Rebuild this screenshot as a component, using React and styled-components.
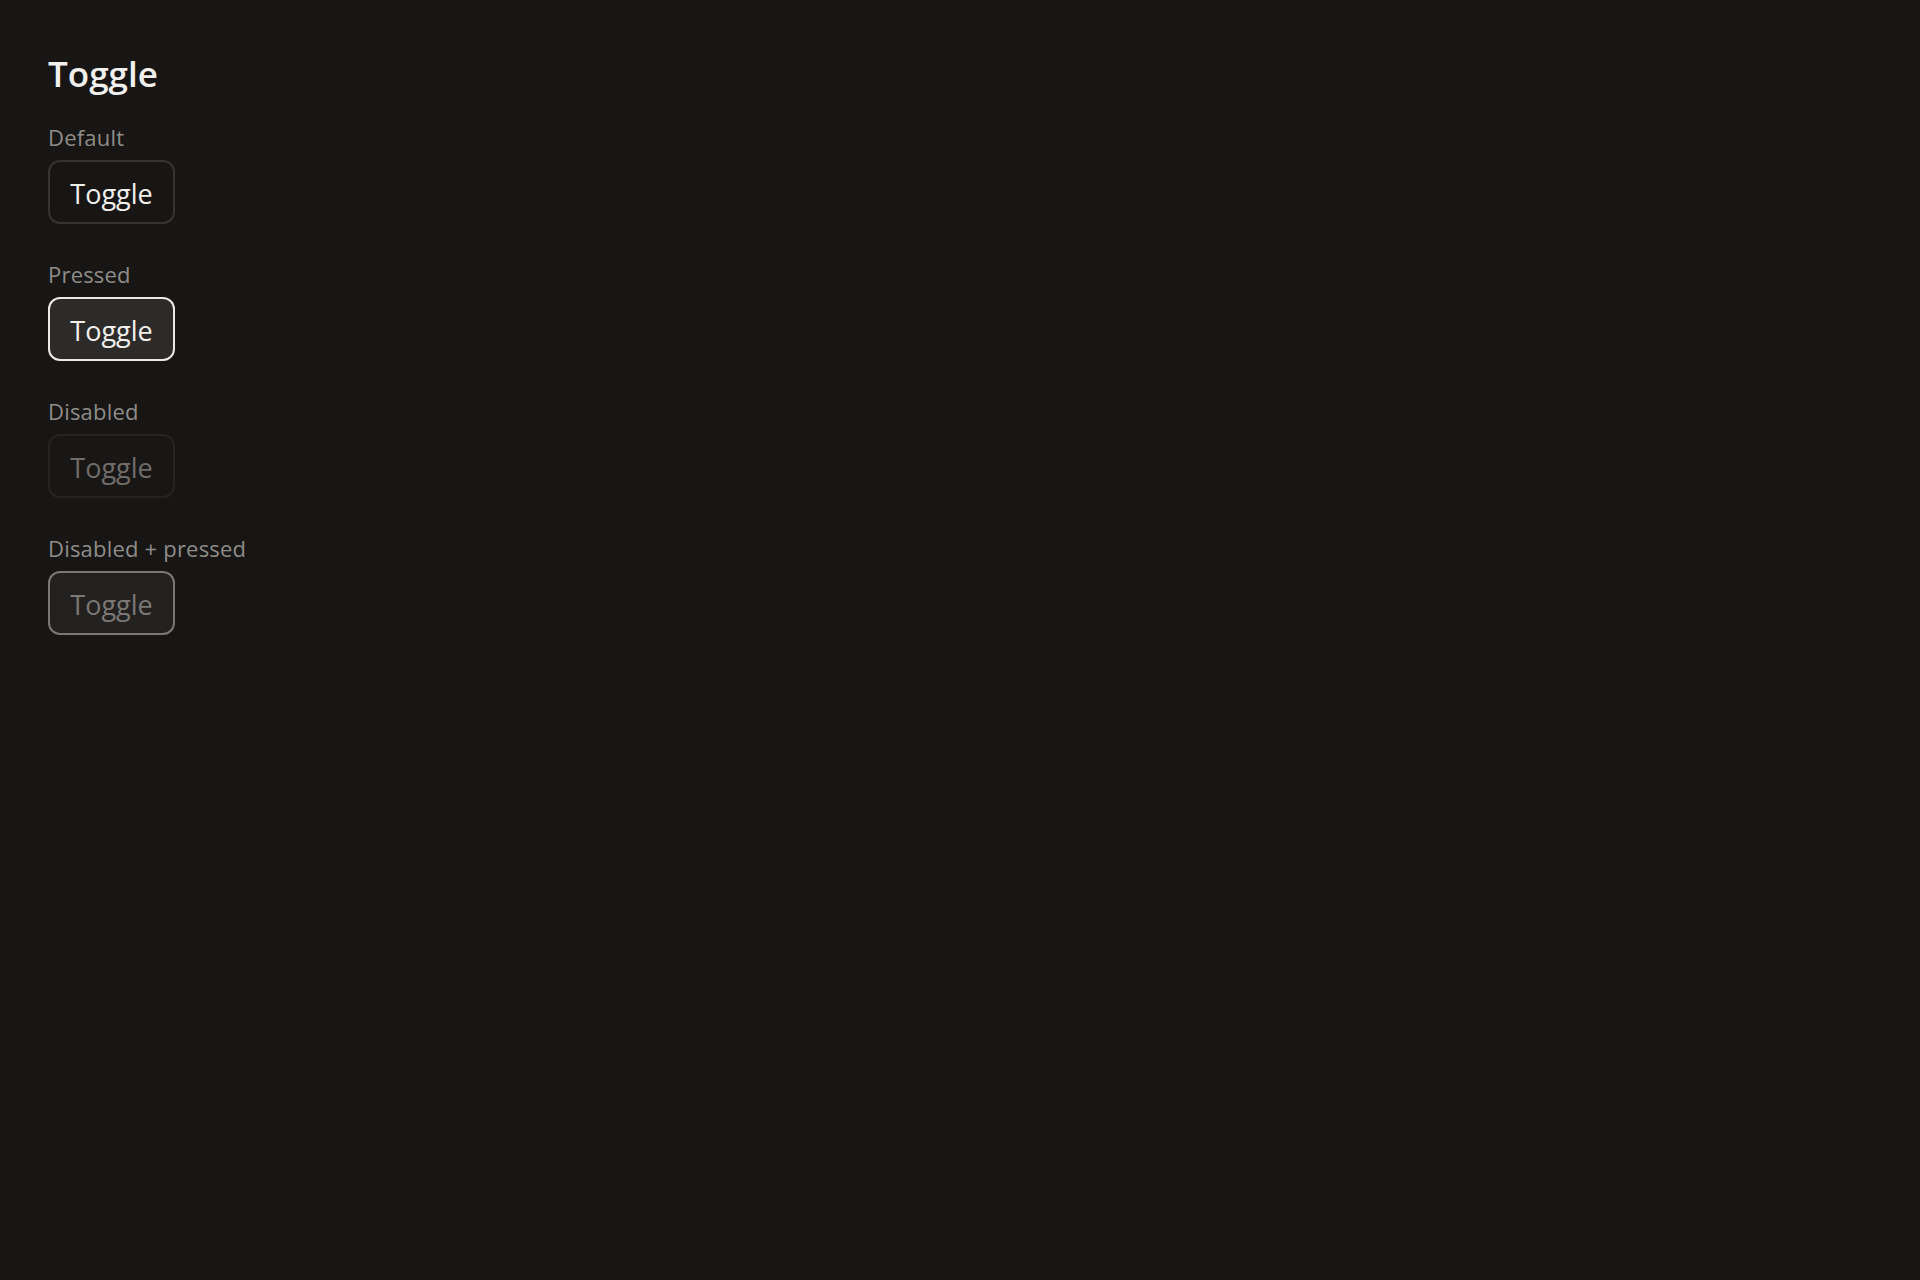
import React, { useState } from "react";
import styled, { createGlobalStyle, css } from "styled-components";

const Global = createGlobalStyle`
  html, body {
    margin: 0;
    padding: 0;
    background: #171615;
  }
  body {
    font-family: "Open Sans", "Noto Sans", sans-serif;
    color: #f2f0ed;
  }
`;

const Page = styled.main`
  min-height: 1280px;
  box-sizing: border-box;
  padding: 53px 48px;
  display: flex;
  flex-direction: column;
  align-items: flex-start;
`;

const Title = styled.h1`
  margin: 0 0 27px;
  font-size: 35px;
  line-height: 42px;
  font-weight: 600;
  color: #f2f0ed;
`;

const Groups = styled.div`
  display: flex;
  flex-direction: column;
  gap: 35px;
`;

const Group = styled.section`
  display: flex;
  flex-direction: column;
  align-items: flex-start;
  gap: 8px;
`;

const Label = styled.div`
  font-size: 22px;
  line-height: 30px;
  letter-spacing: 0.2px;
  color: #8f8c88;
`;

const ToggleButton = styled.button`
  box-sizing: border-box;
  height: 64px;
  width: 127px;
  display: flex;
  align-items: center;
  justify-content: center;
  padding: 2px 0 0;
  border-radius: 12px;
  font-family: inherit;
  font-size: 27px;
  font-weight: 400;
  cursor: pointer;
  border: 2px solid #363432;
  background: #171615;
  color: #f2f0ed;

  ${(p) =>
    p.$pressed &&
    css`
      background: #2d2b29;
      border-color: #ebe9e6;
      color: #f2f0ed;
    `}

  ${(p) =>
    p.disabled &&
    css`
      cursor: default;
      background: #181716;
      border-color: #262423;
      color: #6f6c69;
    `}

  ${(p) =>
    p.disabled &&
    p.$pressed &&
    css`
      background: #232120;
      border-color: #7a7774;
      color: #7a7774;
    `}
`;

function Toggle({ initial = false, disabled = false }) {
  const [pressed, setPressed] = useState(initial);
  return (
    <ToggleButton
      type="button"
      aria-pressed={pressed}
      disabled={disabled}
      $pressed={pressed}
      onClick={() => setPressed((v) => !v)}
    >
      Toggle
    </ToggleButton>
  );
}

const examples = [
  { label: "Default", pressed: false, disabled: false },
  { label: "Pressed", pressed: true, disabled: false },
  { label: "Disabled", pressed: false, disabled: true },
  { label: "Disabled + pressed", pressed: true, disabled: true },
];

export default function App() {
  return (
    <>
      <Global />
      <Page>
        <Title>Toggle</Title>
        <Groups>
          {examples.map((e) => (
            <Group key={e.label}>
              <Label>{e.label}</Label>
              <Toggle initial={e.pressed} disabled={e.disabled} />
            </Group>
          ))}
        </Groups>
      </Page>
    </>
  );
}
